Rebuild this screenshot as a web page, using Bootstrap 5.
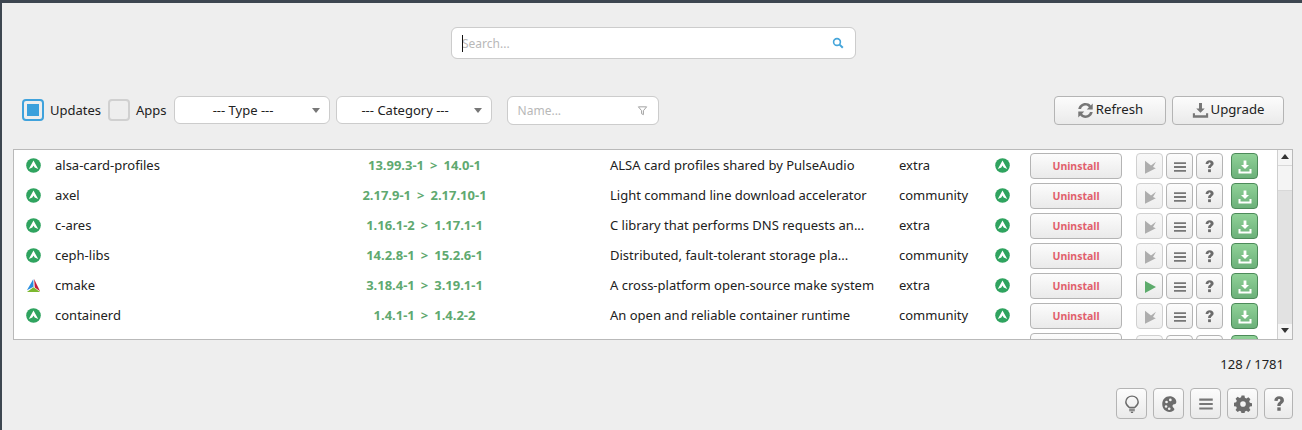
<!DOCTYPE html>
<html lang="en">
<head>
  <meta charset="UTF-8">
  <meta name="viewport" content="width=device-width, initial-scale=1">
  <title>Package manager</title>
  <link href="https://cdn.jsdelivr.net/npm/bootstrap@5.3.3/dist/css/bootstrap.min.css" rel="stylesheet">
  <style>
    html, body { height: 430px; overflow: hidden; }
    body { background: #eeeeee; color: #212121; font-family: "Noto Sans", sans-serif; font-size: 13px; border-top: 3px solid #3d4650; border-left: 2px solid #3d4650; }
    .search-wrap { width: 405px; height: 32px; margin: 24px 0 0 449px; }
    .search-input, .name-input { border: 1px solid #ccc; border-radius: 6px; font-size: 12px; box-shadow: none; }
    .search-input { height: 32px; padding: 0 30px 0 10px; }
    .search-input::placeholder, .name-input::placeholder { color: #b8b8b8; }
    .text-caret { position: absolute; left: 11px; top: 8px; width: 1px; height: 17px; background: #111; }
    .search-icon { position: absolute; right: 12px; top: 10px; }
    .filter-bar { height: 30px; margin: 36px 0 0 20px; }
    .check-box { width: 22px; height: 22px; border: 2px solid #d0d0d0; border-radius: 4px; background: #eee; flex: none; }
    .check-box.on { border-color: #3fa2dc; padding: 3px; }
    .check-box.on i { display: block; width: 100%; height: 100%; background: #3ba0dc; }
    .check-label { margin-left: 6px; margin-right: 7px; padding-top: 2px; }
    .select-box { width: 156px; height: 28px; background: #fff; border: 1px solid #ccc; border-radius: 6px; color: #222; position: relative; padding: 2px 17px 0 0; margin-right: 6px; }
    .select-box::after { content: ""; position: absolute; right: 9px; top: 11px; border: 4px solid transparent; border-top: 5px solid #777; border-bottom: 0; }
    .name-wrap { margin-left: 9px; }
    .name-input { width: 152px; height: 29px; padding: 0 28px 0 10px; }
    .funnel-icon { position: absolute; right: 11px; top: 9px; }
    .gray-btn { background: linear-gradient(#fcfcfc, #eaeaea); border: 1px solid #b4b4b4; border-radius: 4px; color: #222; padding: 0; font-size: 13px; }
    .gray-btn:disabled { opacity: 1; border-color: #d0d0d0; background: linear-gradient(#f8f8f8, #eeeeee); }
    .top-actions { gap: 6px; margin-right: 18px; }
    .top-btn { width: 112px; height: 29px; gap: 2px; font-size: 13.2px; }
    .pkg-table { width: 1280px; height: 191px; margin: 24px 0 0 11px; border: 1px solid #b9b9b9; background: #fff; overflow: hidden; position: relative; }
    .pkg-row { display: grid; grid-template-columns: 41px 255px 229px 360px 96px 35px 106px 30px 30px 35px 27px; height: 26px; margin: 3px 0 4px; align-items: center; white-space: nowrap; }
    .pkg-row > .icon-cell { padding-left: 12px; line-height: 0; margin-bottom: 2px; }
    .pkg-row > .icon-cell-2 { line-height: 0; margin-bottom: 2px; }
    .ver-cell { color: #5fa970; font-weight: 700; font-size: 13px; text-align: center; }
    .ver-cell span { margin: 0 6px; }
    .desc-cell { padding-left: 71px; }
    .act-btn { width: 27px; height: 26px; }
    .dl-btn { width: 27px; height: 26px; background: linear-gradient(#8fd197, #6cb07a); border: 1px solid #4d8a5a; border-radius: 4px; padding: 0; }
    .rm-btn { width: 92px; height: 26px; color: #e15f6c; font-weight: 700; font-size: 10.5px; padding-top: 2px; }
    .scroll-track { position: absolute; right: 0; top: 0; bottom: 0; width: 15px; background: #e2e2e2; border-left: 1px solid #cfcfcf; }
    .scroll-end { height: 15px; background: #f5f5f5; }
    .scroll-thumb { height: 26px; background: #f4f4f4; border-top: 1px solid #d8d8d8; border-bottom: 1px solid #d8d8d8; }
    .arrow-up, .arrow-down { width: 0; border: 4px solid transparent; margin: 4px auto 0; }
    .arrow-up { border-bottom: 5px solid #333; border-top: 0; }
    .arrow-down { border-top: 5px solid #333; border-bottom: 0; }
    .count-line { margin: 15px 18px 0 0; height: 18px; line-height: 18px; }
    .foot-bar { margin: 15px 9px 0 0; gap: 6px; }
    .foot-btn { width: 31px; height: 31px; }
    .foot-btn:last-child { width: 29px; }
  </style>
</head>
<body>
  <svg width="0" height="0" class="position-absolute">
    <symbol id="ic-arch" viewBox="0 0 16 16">
      <circle cx="8" cy="8" r="7.800" fill="#2fa35f"/>
      <path d="M8 2.600 13 11.800 9.300 10.200 8 8 6.700 10.200 3 11.800Z" fill="#fff"/>
    </symbol>
    <symbol id="ic-cmake" viewBox="0 0 16 16">
      <path d="M7.800 1 1 13 8 9.400Z" fill="#2a8fe0"/>
      <path d="M8.600 1 15 14 9.400 10.200Z" fill="#c41f3a"/>
      <path d="M8 9.800 1 15H15Z" fill="#7cb82f"/>
    </symbol>
    <symbol id="ic-noplay" viewBox="0 0 16 16">
      <path d="M3 1.800 9 6.400 14 2.800 11 8 13.800 9.200 3 14.800Z" fill="#adadad"/>
    </symbol>
    <symbol id="ic-play" viewBox="0 0 16 16"><path d="M3 2 14 8 3 14Z" fill="#5dab6c"/></symbol>
    <symbol id="ic-lines" viewBox="0 0 16 16"><path d="M2 3.200h12v1.800H2zM2 7.100h12v1.800H2zM2 11h12v1.800H2z" fill="#777"/></symbol>
    <symbol id="ic-help" viewBox="0 0 16 16">
      <path d="M3.800 5.200C4 2.600 5.700 1.200 8.200 1.200c2.500 0 4.200 1.400 4.200 3.400 0 1.500-.8 2.300-1.800 3.100-.9.700-1.100 1-1.100 2H6.500c0-1.700.4-2.500 1.400-3.300.9-.7 1.300-1.100 1.300-1.700 0-.7-.4-1.100-1.100-1.100-.8 0-1.200.6-1.300 1.700Z" fill="#6c6c6c"/>
      <rect x="6.500" y="11" width="3" height="3" fill="#6c6c6c"/>
    </symbol>
    <symbol id="ic-dl" viewBox="0 0 16 16">
      <path d="M6.600 1.500h2.800v4.500H12L8 10 4 6h2.600Z M1.500 10h2v2.500h9V10h2v4.500h-13Z" fill="#fff"/>
    </symbol>
    <symbol id="ic-dl-gray" viewBox="0 0 16 16">
      <path d="M6.600 1h2.800v5H12L8 10 4 6h2.600Z M.8 10.500h2v2h10.400v-2h2v4.300H.8Z" fill="#777"/>
    </symbol>
    <symbol id="ic-refresh" viewBox="0 0 16 16">
      <path d="M1.200 6.600C1.800 3.300 4.700 1 8 1c2 0 3.800.8 5 2.200L14.800 1.400V7H9.200l2-2C10.400 4 9.300 3.400 8 3.400c-2 0-3.700 1.300-4.200 3.200Z M14.800 9.400C14.200 12.700 11.300 15 8 15c-2 0-3.800-.8-5-2.200L1.200 14.600V9h5.600l-2 2c.8 1 1.900 1.600 3.200 1.600 2 0 3.700-1.300 4.200-3.200Z" fill="#777"/>
    </symbol>
    <symbol id="ic-search" viewBox="0 0 12 12">
      <circle cx="5" cy="5" r="3.400" fill="none" stroke="#45a5da" stroke-width="1.600"/>
      <path d="M7.600 7.600 10.800 10.800" stroke="#45a5da" stroke-width="2"/>
    </symbol>
    <symbol id="ic-funnel" viewBox="0 0 12 12">
      <path d="M1.500 2h9L7 6.200V10.500L5 9.500V6.200Z" fill="none" stroke="#9a9a9a"/>
    </symbol>
    <symbol id="ic-bulb" viewBox="0 0 16 16">
      <path d="M5.500 11C3.800 9.700 2.500 8.300 2.500 6.300 2.500 3.200 5 1 8 1s5.500 2.200 5.500 5.300c0 2-1.300 3.400-3 4.700Z" fill="none" stroke="#6c6c6c" stroke-width="1.300"/>
      <path d="M5.500 12.500h5M5.500 14h5M7 15.500h2" stroke="#6c6c6c" stroke-width="1.100"/>
    </symbol>
    <symbol id="ic-palette" viewBox="0 0 16 16">
      <path fill-rule="evenodd" d="M8.500 1C4.800 1 2 3.900 2 8s2.800 7 6.500 7c2.200 0 4.300-1 4.300-2.300 0-1.100-1.700-1.600-1.700-3 0-1 .9-1.500 1.700-1.500 1.200 0 1.700-1 1.700-2.200C14.500 3.200 12 1 8.500 1ZM9.200 3.200a1.200 1.200 0 1 1 0 2.400 1.200 1.200 0 0 1 0-2.400ZM5.800 5a1.200 1.200 0 1 1 0 2.400A1.200 1.200 0 0 1 5.800 5ZM5.400 9a1.200 1.200 0 1 1 0 2.400 1.200 1.200 0 0 1 0-2.400ZM8.200 11a1.200 1.200 0 1 1 0 2.400 1.200 1.200 0 0 1 0-2.400Z" fill="#6c6c6c"/>
    </symbol>
    <symbol id="ic-gear" viewBox="0 0 16 16">
      <path fill-rule="evenodd" d="M6.700 1h2.600l.4 2 1.300.6 1.800-1.100 1.800 1.800-1.100 1.800.6 1.300 2 .4v2.600l-2 .4-.6 1.300 1.100 1.800-1.800 1.800-1.800-1.100-1.300.6-.4 2H6.700l-.4-2-1.300-.6-1.800 1.100-1.800-1.800 1.100-1.800-.6-1.300-2-.4V7.400l2-.4.600-1.300-1.100-1.800 1.800-1.800 1.800 1.100 1.300-.6ZM8 6a2.500 2.500 0 1 0 0 5 2.500 2.500 0 0 0 0-5Z" fill="#6c6c6c" transform="translate(0 -.5)"/>
    </symbol>
  </svg>

  <div class="search-wrap position-relative">
    <input class="form-control search-input" type="text" placeholder="Search...">
    <span class="text-caret"></span>
    <svg class="search-icon" width="12" height="12"><use href="#ic-search"/></svg>
  </div>

  <div class="filter-bar d-flex align-items-center">
    <span class="check-box on"><i></i></span>
    <span class="check-label">Updates</span>
    <span class="check-box"></span>
    <span class="check-label">Apps</span>
    <div class="select-box d-flex align-items-center justify-content-center">--- Type ---</div>
    <div class="select-box d-flex align-items-center justify-content-center">--- Category ---</div>
    <div class="position-relative name-wrap">
      <input class="form-control name-input" type="text" placeholder="Name...">
      <svg class="funnel-icon" width="11" height="11"><use href="#ic-funnel"/></svg>
    </div>
    <div class="d-flex ms-auto top-actions">
      <button class="gray-btn top-btn d-flex align-items-center justify-content-center"><svg width="17" height="17"><use href="#ic-refresh"/></svg>Refresh</button>
      <button class="gray-btn top-btn d-flex align-items-center justify-content-center"><svg width="17" height="17"><use href="#ic-dl-gray"/></svg>Upgrade</button>
    </div>
  </div>

  <div class="pkg-table">
    <div id="pkgRows"></div>
    <div class="scroll-track d-flex flex-column">
      <div class="scroll-end"><div class="arrow-up"></div></div>
      <div class="scroll-thumb"></div>
      <div class="flex-grow-1"></div>
      <div class="scroll-end"><div class="arrow-down"></div></div>
    </div>
  </div>

  <div class="count-line text-end">128 / 1781</div>

  <div class="foot-bar d-flex justify-content-end">
    <button class="gray-btn foot-btn"><svg width="18" height="18"><use href="#ic-bulb"/></svg></button>
    <button class="gray-btn foot-btn"><svg width="18" height="18"><use href="#ic-palette"/></svg></button>
    <button class="gray-btn foot-btn"><svg width="18" height="18"><use href="#ic-lines"/></svg></button>
    <button class="gray-btn foot-btn"><svg width="18" height="18"><use href="#ic-gear"/></svg></button>
    <button class="gray-btn foot-btn"><svg width="18" height="18"><use href="#ic-help"/></svg></button>
  </div>

  <script>
    const pkgs = [
      ['alsa-card-profiles', '13.99.3-1', '14.0-1', 'ALSA card profiles shared by PulseAudio', 'extra'],
      ['axel', '2.17.9-1', '2.17.10-1', 'Light command line download accelerator', 'community'],
      ['c-ares', '1.16.1-2', '1.17.1-1', 'C library that performs DNS requests an...', 'extra'],
      ['ceph-libs', '14.2.8-1', '15.2.6-1', 'Distributed, fault-tolerant storage pla...', 'community'],
      ['cmake', '3.18.4-1', '3.19.1-1', 'A cross-platform open-source make system', 'extra', true],
      ['containerd', '1.4.1-1', '1.4.2-2', 'An open and reliable container runtime', 'community'],
      null
    ];
    // last row is cut by the table edge, only its top shows
    document.getElementById('pkgRows').innerHTML = pkgs.map(p => {
      const d = p || ['', '', '', '', ''];
      return `
      <div class="pkg-row">
        <div class="icon-cell"><svg width="15" height="15"><use href="#${d[5] ? 'ic-cmake' : 'ic-arch'}"/></svg></div>
        <div>${d[0]}</div>
        <div class="ver-cell">${p ? `${d[1]}<span>&gt;</span>${d[2]}` : ''}</div>
        <div class="desc-cell">${d[3]}</div>
        <div>${d[4]}</div>
        <div class="icon-cell-2"><svg width="15" height="15"><use href="#ic-arch"/></svg></div>
        <div><button class="gray-btn rm-btn">${p ? 'Uninstall' : ''}</button></div>
        <div><button class="gray-btn act-btn" ${d[5] ? '' : 'disabled'}><svg width="16" height="16"><use href="#${d[5] ? 'ic-play' : 'ic-noplay'}"/></svg></button></div>
        <div><button class="gray-btn act-btn"><svg width="16" height="16"><use href="#ic-lines"/></svg></button></div>
        <div><button class="gray-btn act-btn"><svg width="15" height="15"><use href="#ic-help"/></svg></button></div>
        <div><button class="dl-btn"><svg width="16" height="16"><use href="#ic-dl"/></svg></button></div>
      </div>`;
    }).join('');
  </script>
  <script src="https://cdn.jsdelivr.net/npm/bootstrap@5.3.3/dist/js/bootstrap.bundle.min.js"></script>
</body>
</html>
